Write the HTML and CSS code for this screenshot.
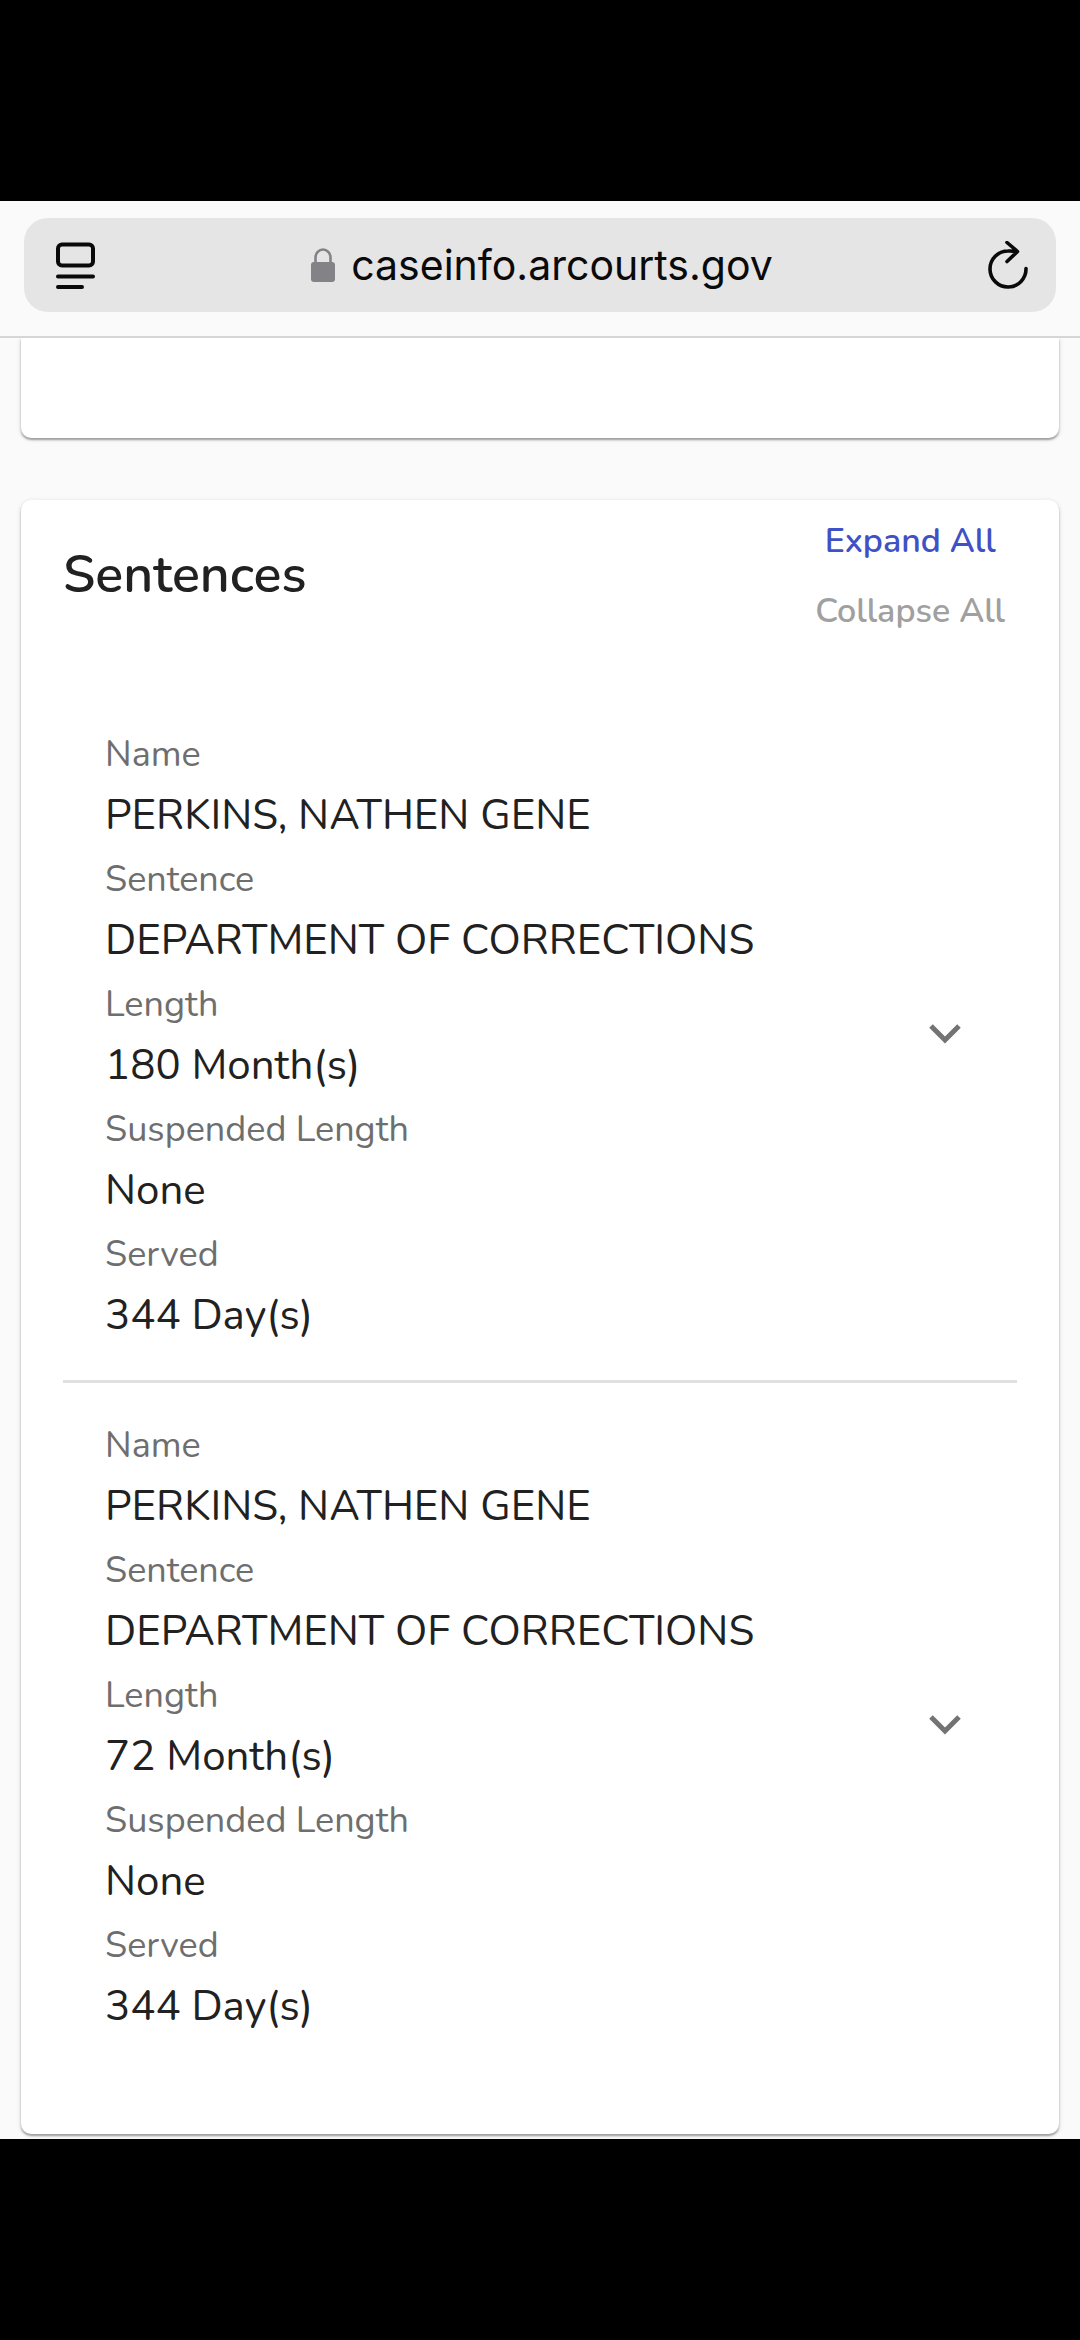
FILE: index.html
```html
<!DOCTYPE html>
<html lang="en">
<head>
<meta charset="utf-8">
<meta name="viewport" content="width=device-width, initial-scale=1">
<title>caseinfo.arcourts.gov</title>
<link rel="stylesheet" href="styles.css">
</head>
<body>
<div class="screen">
  <header class="toolbar">
    <div class="address-bar">
      <button class="icon-button" type="button" aria-label="Page menu">
        <svg width="40" height="48" viewBox="0 0 40 48" fill="none" stroke="#0a0a0a" stroke-width="4" stroke-linecap="round">
          <rect x="2" y="3.500" width="35" height="21" rx="4"/>
          <path d="M2 35.500H37M2 46H26"/>
        </svg>
      </button>
      <button class="address" type="button">
        <svg width="24" height="34" viewBox="0 0 24 34" aria-hidden="true">
          <path d="M4.500 16V9.500a7.500 8 0 0 1 15 0V16" fill="none" stroke="#838387" stroke-width="2.600"/>
          <rect x="0" y="14" width="24" height="20" rx="3" fill="#838387"/>
        </svg>
        <span>caseinfo.arcourts.gov</span>
      </button>
      <button class="icon-button" type="button" aria-label="Reload">
        <svg width="40" height="48" viewBox="0 0 40 48" fill="none" stroke="#0a0a0a" stroke-width="3.600" stroke-linecap="round" stroke-linejoin="round">
          <path d="M38 27.500A18 18 0 1 1 20 10Q25 9.800 28 10.500M19 1.500L29.500 10.500L19 20.500"/>
        </svg>
      </button>
    </div>
  </header>

  <main class="page">
    <section class="card card-previous" aria-label="Previous section"></section>

    <section class="card sentences">
      <div class="card-header">
        <h2 class="card-title">Sentences</h2>
        <div class="card-actions">
          <button class="text-button" type="button">Expand All</button>
          <button class="text-button" type="button" disabled>Collapse All</button>
        </div>
      </div>

      <article class="entry">
        <dl class="fields">
          <dt>Name</dt><dd>PERKINS, NATHEN GENE</dd>
          <dt>Sentence</dt><dd>DEPARTMENT OF CORRECTIONS</dd>
          <dt>Length</dt><dd>180 Month(s)</dd>
          <dt>Suspended Length</dt><dd>None</dd>
          <dt>Served</dt><dd>344 Day(s)</dd>
        </dl>
        <button class="toggle" type="button" aria-label="Expand sentence" aria-expanded="false">
          <svg width="32" height="20" viewBox="0 0 32 20" fill="none" stroke="#737373" stroke-width="5"><path d="M2 2L16 16L30 2"/></svg>
        </button>
      </article>

      <article class="entry">
        <dl class="fields">
          <dt>Name</dt><dd>PERKINS, NATHEN GENE</dd>
          <dt>Sentence</dt><dd>DEPARTMENT OF CORRECTIONS</dd>
          <dt>Length</dt><dd>72 Month(s)</dd>
          <dt>Suspended Length</dt><dd>None</dd>
          <dt>Served</dt><dd>344 Day(s)</dd>
        </dl>
        <button class="toggle" type="button" aria-label="Expand sentence" aria-expanded="false">
          <svg width="32" height="20" viewBox="0 0 32 20" fill="none" stroke="#737373" stroke-width="5"><path d="M2 2L16 16L30 2"/></svg>
        </button>
      </article>
    </section>
  </main>
</div>
</body>
</html>
```
FILE: styles.css
```css
* {
  box-sizing: border-box;
}

body {
  margin: 0;
  background: #000;
  color: #212121;
  font-family: Nunito, Lato, sans-serif;
}

button {
  padding: 0;
  border: 0;
  background: none;
  font: inherit;
  color: inherit;
}

svg {
  display: block;
}

.screen {
  min-height: 100vh;
  padding: 201px 0;
}

.toolbar {
  padding: 17px 24px 24px;
  background: #fafafa;
  border-bottom: 2px solid #d6d6d6;
}

.address-bar {
  display: flex;
  align-items: center;
  justify-content: space-between;
  height: 94px;
  padding: 0 28px 0 32px;
  border-radius: 24px;
  background: #e5e5e5;
}

.address {
  display: flex;
  align-items: center;
  gap: 16px;
  color: #0a0a0a;
  font-family: Inter, sans-serif;
  font-size: 41px;
  line-height: 52px;
}

.page {
  display: flex;
  flex-direction: column;
  gap: 62px;
  padding: 0 21px 5px;
  overflow: hidden;
  background: #fafafa;
}

.card {
  border-radius: 10px;
  background: #fff;
  box-shadow: 0 2px 2px #a0a0a0, 0 1px 5px #dcdcdc;
}

.card-previous {
  height: 100px;
  border-radius: 0 0 10px 10px;
}

.sentences {
  padding: 0 42px 63px;
}

.card-header {
  display: flex;
  justify-content: space-between;
  align-items: flex-start;
  height: 192px;
}

.card-title {
  margin: 0;
  padding-top: 45px;
  font-size: 52px;
  line-height: 60px;
  font-weight: 600;
}

.card-actions {
  display: flex;
  flex-direction: column;
  align-items: center;
  padding: 6px 12px 0 0;
}

.text-button {
  color: #3f51c5;
  font-size: 34px;
  line-height: 70px;
  font-weight: 600;
}

.text-button:disabled {
  color: #a0a0a0;
}

.entry {
  display: flex;
  align-items: center;
  justify-content: space-between;
  padding: 29px 56px 34px 42px;
}

.entry + .entry {
  border-top: 3px solid #e0e0e0;
}

.fields {
  margin: 0;
}

.fields dt {
  padding-top: 4px;
  color: #6e6e6e;
  font-size: 36px;
  line-height: 60px;
}

.fields dd {
  margin: 0;
  font-size: 42px;
  line-height: 61px;
}
```
